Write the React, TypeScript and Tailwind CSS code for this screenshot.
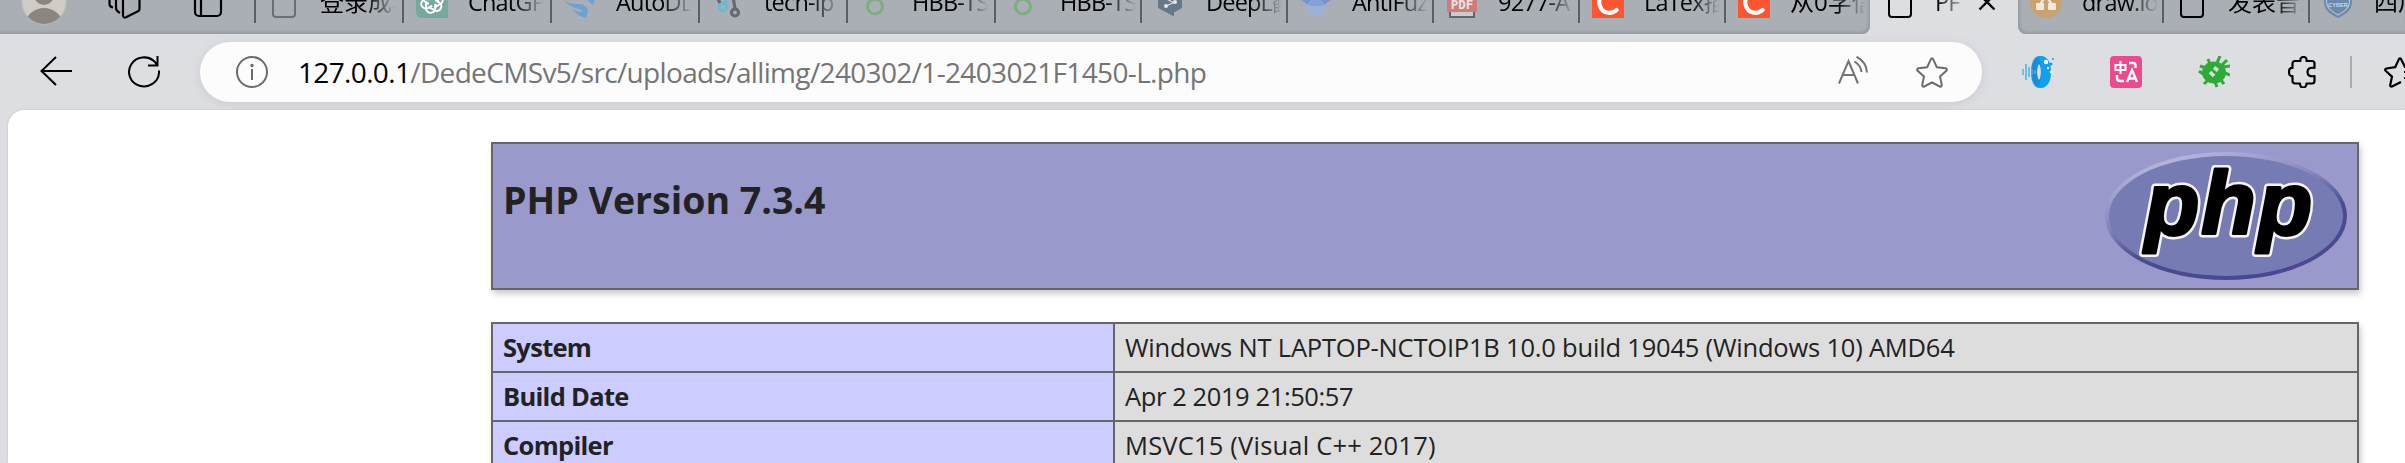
import React from "react";

type Tab = { title: string; width: string; icon: React.ReactNode; cjk?: boolean };

const DocIcon = ({ color }: { color: string }) => (
  <svg width="32" height="32" viewBox="0 0 32 32" fill="none" stroke={color} strokeWidth="2">
    <path d="M8 1h11l8 8v19a3 3 0 0 1-3 3H8a3 3 0 0 1-3-3V4a3 3 0 0 1 3-3z" />
  </svg>
);

const ChatIcon = () => (
  <svg width="32" height="32" viewBox="0 0 32 32">
    <path d="M6 0h26v32H6a6 6 0 0 1-6-6V6a6 6 0 0 1 6-6z" fill="#75a99b" />
    <g transform="translate(4 4)" fill="none" stroke="#fff" strokeWidth="1.9">
      {[0, 60, 120, 180, 240, 300].map((a) => (
        <path key={a} transform={`rotate(${a} 12 12)`} d="M12 8.2 16 6a4.6 4.6 0 0 1 6.2 6.2 4.6 4.6 0 0 1-1.8 1.7L15.4 17M8.6 10.2V6" />
      ))}
    </g>
  </svg>
);

const AutoIcon = () => (
  <svg width="32" height="32" viewBox="0 0 32 32" fill="#70a1d4">
    <path d="M0 13c3 4 8 5 14 5 6 0 10 3 10 7l-2 7c-5-1-12-5-13-9 4 3 9 4 9 2C18 22 6 24 0 13z" />
    <path d="M30 2c2 6 2 11-1 17l-5-4c3-3 4-8 6-13z" />
  </svg>
);

const TechIcon = () => (
  <svg width="32" height="32" viewBox="0 0 32 32" fill="none" strokeWidth="3.2">
    <path d="M18 8l-5 9" stroke="#6cb9cf" />
    <circle cx="11" cy="21" r="3.800" stroke="#6cb9cf" />
    <path d="M5 11l3 6M21 10l2 13" stroke="#666a70" />
    <circle cx="23" cy="26.500" r="3.500" stroke="#666a70" />
  </svg>
);

const RingIcon = () => (
  <svg width="32" height="32" viewBox="0 0 32 32" fill="none">
    <circle cx="15" cy="20.500" r="7.500" stroke="#7cae80" strokeWidth="3" />
  </svg>
);

const DeepIcon = () => (
  <svg width="32" height="32" viewBox="0 0 32 32">
    <path d="M16 0 28 7v15l-8 4.500v4L4 22V7z" fill="#677889" />
    <path d="M12 20l9-4M11 12l9 5" stroke="#d7dbe0" strokeWidth="1.3" />
    <circle cx="12" cy="20" r="2" fill="#e4e7ea" />
    <circle cx="21" cy="16" r="2" fill="#e4e7ea" />
  </svg>
);

const ScholarIcon = () => (
  <svg width="32" height="32" viewBox="0 0 32 32">
    <path d="M16 2 32 13 16 25 0 13z" fill="#7493cf" />
    <circle cx="16" cy="22" r="9" fill="#9db1d8" />
    <path d="M8 18a9 9 0 0 1 16 0l-2 2H10z" fill="#86a1d6" />
  </svg>
);

const PdfIcon = () => (
  <svg width="32" height="32" viewBox="0 0 32 32">
    <path d="M4 1h24v30H4z" fill="#c9cdd1" stroke="#62666b" strokeWidth="2" />
    <path d="M1 9h30v17H1z" fill="#d07b7d" />
    <text x="16" y="22.500" textAnchor="middle" fontFamily="DejaVu Sans Mono" fontWeight="700" fontSize="12.500" fill="#e9e3e4">PDF</text>
  </svg>
);

const CIcon = () => (
  <svg width="32" height="32" viewBox="0 0 32 32">
    <path d="M0 0h32v32H0z" fill="#fc5531" />
    <path d="M24 9c-2-3-6-4-9.500-3C8 8 6 15 8 20c2 7 11 9 16.500 4" fill="none" stroke="#fff" strokeWidth="4.200" strokeLinecap="round" />
  </svg>
);

const DrawIcon = () => (
  <svg width="32" height="32" viewBox="0 0 32 32">
    <circle cx="16" cy="16" r="16" fill="#cba26c" />
    <path d="M16 9 10 19M16 9l6 10" stroke="#eee9e1" strokeWidth="2.500" />
    <rect x="12" y="5" width="8" height="7" rx="1" fill="#eee9e1" />
    <rect x="6" y="17" width="8" height="7" rx="1" fill="#eee9e1" />
    <rect x="18" y="17" width="8" height="7" rx="1" fill="#eee9e1" />
  </svg>
);

const CyberIcon = () => (
  <svg width="32" height="32" viewBox="0 0 32 32">
    <path d="M16 0 30 4v12c0 8-7 13-14 16C9 29 2 24 2 16V4z" fill="#6c88ab" />
    <path d="M16 3 27.500 6v10c0 6-5.500 10-11.500 13C10 26 4.500 22 4.500 16V6z" fill="none" stroke="#b7c3d2" strokeWidth="1.200" />
    <text x="16" y="21" textAnchor="middle" fontFamily="Liberation Sans" fontWeight="700" fontSize="5.500" fill="#d0d7e0">CYBER</text>
  </svg>
);

const leftTabs: Tab[] = [
  { title: "登录成功", width: "w-[148px]", icon: <DocIcon color="#6b6e72" />, cjk: true },
  { title: "ChatGPT", width: "w-[148px]", icon: <ChatIcon /> },
  { title: "AutoDL", width: "w-[148px]", icon: <AutoIcon /> },
  { title: "tech-ip", width: "w-[148px]", icon: <TechIcon /> },
  { title: "HBB-TS", width: "w-[148px]", icon: <RingIcon /> },
  { title: "HBB-TS", width: "w-[146px]", icon: <RingIcon /> },
  { title: "DeepL翻", width: "w-[146px]", icon: <DeepIcon /> },
  { title: "AntiFuzz", width: "w-[146px]", icon: <ScholarIcon /> },
  { title: "9277-A", width: "w-[146px]", icon: <PdfIcon /> },
  { title: "LaTex插", width: "w-[146px]", icon: <CIcon /> },
  { title: "从0学信", width: "w-[146px]", icon: <CIcon />, cjk: true },
];

const rightTabs: Tab[] = [
  { title: "draw.io", width: "w-[144px]", icon: <DrawIcon /> },
  { title: "发表音乐", width: "w-[146px]", icon: <DocIcon color="#000" />, cjk: true },
  { title: "四川大学", width: "w-[146px]", icon: <CyberIcon />, cjk: true },
];

const TabItem = ({ tab, divider = true }: { tab: Tab; divider?: boolean }) => (
  <div className={`flex h-16 shrink-0 items-center ${tab.width}`}>
    {divider && <div className="h-[42px] w-[2px] shrink-0 bg-[#5b5e62]" />}
    <div className="ml-3 w-8 shrink-0">{tab.icon}</div>
    <div
      className={`ml-5 w-[76px] shrink-0 overflow-hidden whitespace-nowrap leading-10 text-black [mask-image:linear-gradient(to_right,#000_46px,transparent_76px)] ${tab.cjk ? "text-[24px]" : "text-[23.5px] tracking-[-0.8px]"}`}
    >
      {tab.title}
    </div>
  </div>
);

const Star = ({ color }: { color: string }) => (
  <svg width="32" height="32" viewBox="0 0 32 32" fill="none" stroke={color} strokeWidth="2" strokeLinejoin="round">
    <path d="M16 2.500c.6 0 1 .3 1.200.8l3.600 7.900 8.600 1.100c1.400.2 1.900 1.500 1 2.400l-6.400 5.900 1.800 8.400c.2 1.300-.9 2.100-2 1.500L16 26.400l-7.800 4.100c-1.100.6-2.200-.2-2-1.500L8 20.600l-6.400-5.900c-.9-.9-.4-2.200 1-2.400l8.600-1.100 3.600-7.900c.2-.5.6-.8 1.200-.8z" />
  </svg>
);

const PhpLogo = () => (
  <svg width="242" height="128" viewBox="0 0 242 128">
    <defs>
      <linearGradient id="rim" x1="0.250" y1="0" x2="0.750" y2="1">
        <stop offset="0.050" stopColor="#b4b4dc" />
        <stop offset="0.380" stopColor="#8585bd" />
        <stop offset="0.620" stopColor="#4b4b90" />
        <stop offset="1" stopColor="#484890" />
      </linearGradient>
    </defs>
    <ellipse cx="121" cy="64" rx="121" ry="64" fill="url(#rim)" />
    <ellipse cx="121" cy="64" rx="117" ry="60" fill="#777bb3" />
    <g fontFamily="Liberation Sans" fontStyle="italic" fontWeight="700" fontSize="89" strokeLinejoin="round">
      <text x="40" y="82" textLength="167" fill="#fff" stroke="#f4f4f8" strokeWidth="8">
        php
      </text>
      <text x="40" y="82" textLength="167" fill="#000" stroke="#000" strokeWidth="3" aria-hidden="true">
        php
      </text>
    </g>
  </svg>
);

const rows = [
  { k: "System", v: "Windows NT LAPTOP-NCTOIP1B 10.0 build 19045 (Windows 10) AMD64", spacing: "tracking-[-0.200px]" },
  { k: "Build Date", v: "Apr 2 2019 21:50:57", spacing: "tracking-[-0.400px]" },
  { k: "Compiler", v: "MSVC15 (Visual C++ 2017)", spacing: "tracking-[0.200px]" },
];

export default function App() {
  return (
    <div className="flex h-[463px] w-[2405px] flex-col overflow-hidden bg-[#dddee2] font-['Open_Sans','Noto_Sans_CJK_SC',sans-serif]">
      <div className="flex h-[34px] shrink-0 overflow-hidden">
        <div className="flex h-[34px] w-[1870px] shrink-0 items-end overflow-hidden rounded-br-[8px] bg-[#aaafb6] shadow-[inset_-2px_-2px_3px_#979ba1]">
          <div className="flex h-16 w-[254px] shrink-0 items-center">
            <svg className="ml-[21px] shrink-0" width="46" height="46" viewBox="0 0 46 46">
              <defs>
                <clipPath id="face"><circle cx="23" cy="23" r="22" /></clipPath>
              </defs>
              <circle cx="23" cy="23" r="22" fill="#d0cdc7" stroke="#c1bfba" />
              <g clipPath="url(#face)" fill="#8c8681">
                <circle cx="23" cy="16" r="10" />
                <ellipse cx="23" cy="44" rx="18" ry="15" />
              </g>
            </svg>
            <svg className="ml-[40px] shrink-0" width="34" height="34" viewBox="0 0 34 34" fill="none" stroke="#000" strokeWidth="2.200" strokeLinejoin="round">
              <path d="M16 9 30 2c1.500-.6 2.500.3 2.500 1.500V24c0 1-.5 1.800-1.500 2.300l-12 6c-1.500.7-3 0-3-1.500z" />
              <path d="M9 5v18c0 2 1 3.500 4 5M2.500 4v15c0 2 1 3 3.500 3.500" />
            </svg>
            <svg className="ml-[51px] shrink-0" width="32" height="32" viewBox="0 0 32 32" fill="none" stroke="#000" strokeWidth="2.200">
              <rect x="3" y="2" width="26" height="28" rx="4" />
              <path d="M9 9v21M3 9h26" />
            </svg>
          </div>
          {leftTabs.map((t, i) => (
            <TabItem key={i} tab={t} />
          ))}
        </div>
        <div className="flex h-[34px] w-[148px] shrink-0 items-end overflow-hidden">
          <div className="flex h-16 items-center">
            <div className="ml-[14px] w-8">
              <DocIcon color="#000" />
            </div>
            <div className="ml-[19px] w-[26px] overflow-hidden whitespace-nowrap text-[23.5px] leading-10 tracking-[-0.8px] text-black [mask-image:linear-gradient(to_right,#000_2px,transparent_32px)]">PF</div>
            <svg className="ml-[17px]" width="18" height="18" viewBox="0 0 18 18" stroke="#000" strokeWidth="2.400">
              <path d="M1.500 1.500l15 15M16.500 1.500l-15 15" />
            </svg>
          </div>
        </div>
        <div className="flex h-[34px] w-[387px] shrink-0 items-end overflow-hidden rounded-bl-[8px] bg-[#aaafb6] shadow-[inset_2px_-2px_3px_#979ba1]">
          {rightTabs.map((t, i) => (
            <TabItem key={i} tab={t} divider={i > 0} />
          ))}
        </div>
      </div>

      <div className="flex h-[76px] shrink-0 items-center">
        <svg className="ml-10 shrink-0" width="32" height="32" viewBox="0 0 32 32" fill="none" stroke="#000" strokeWidth="2">
          <path d="M32 15H1.500M16 1 1.500 15 16 29" />
        </svg>
        <svg className="ml-14 shrink-0" width="32" height="32" viewBox="0 0 32 32" fill="none" stroke="#000" strokeWidth="2">
          <path d="M31 14.500V17a15 14.500 0 1 1-4.500-11.500L29 9M29.500 0v9.500H20" />
        </svg>
        <div className="ml-10 flex h-[60px] w-[1782px] shrink-0 items-center rounded-full bg-[#fcfcfc] shadow-[0_2px_10px_#c9cacf]">
          <svg className="ml-9 shrink-0" width="32" height="32" viewBox="0 0 32 32" fill="none" stroke="#6b6b6b" strokeWidth="2">
            <circle cx="16" cy="16" r="15" />
            <path d="M16 13v11" />
            <circle cx="16" cy="9.500" r="1.700" fill="#6b6b6b" stroke="none" />
          </svg>
          <div className="ml-[30px] flex-1 whitespace-nowrap text-[28px] leading-[60px] tracking-[-0.65px] text-[#757575]">
            <span className="text-black">127.0.0.1</span>/DedeCMSv5/src/uploads/allimg/240302/1-2403021F1450-L.php
          </div>
          <svg className="shrink-0" width="32" height="32" viewBox="0 0 32 32" fill="none" stroke="#737373" strokeWidth="2">
            <path d="M1 27.500 10.500 5 20 27.500M4.500 19h12M16.500 5.500c4 2.500 6.500 6 7 10.500M18.500.8C25 4 28.500 9.500 29 16.500" />
          </svg>
          <div className="ml-[46px] mr-[34px] shrink-0">
            <Star color="#6b6b6b" />
          </div>
        </div>
        <svg className="ml-10 shrink-0" width="32" height="32" viewBox="0 0 32 32">
          <path d="M17 0c8-1 12 6 12 16s-4 17-12 16C11 31 9 24 9 16S11 1 17 0z" fill="#0da2ee" />
          <path d="M15 2c3 2 4 6 4 14s-1 12-4 14c-4-3-5-8-5-14s1-11 5-14z" fill="#2089d4" />
          <path d="M17 8c2.500 3 2.500 13 0 16-2.500-3-2.500-13 0-16z" fill="#dddee2" />
          <path d="M1 13v6M4 8v16M7 11v10M10 13v6M13 14v4" stroke="#4fb0e6" strokeWidth="1.500" />
          <circle cx="24" cy="6" r="2.200" fill="#fff" />
          <circle cx="29" cy="8" r="1.500" fill="#0da2ee" />
          <circle cx="31" cy="3" r="1" fill="#0da2ee" />
          <circle cx="26" cy="12" r="1.200" fill="#dff2fc" />
          <circle cx="29" cy="16" r="1.300" fill="#dff2fc" />
        </svg>
        <svg className="ml-14 shrink-0" width="32" height="32" viewBox="0 0 32 32" fill="none" stroke="#fff" strokeWidth="2.400">
          <rect width="32" height="32" rx="4" fill="#eb4a8c" stroke="none" />
          <path d="M5.500 9h10v5h-10zM10.500 5v13" strokeWidth="2" />
          <path d="M19 7h4q2.500 0 2.500 2.500V12M7 19v2.500Q7 25 10 25h4M17 26l5-12 5 12M19 22.500h6" />
        </svg>
        <svg className="ml-14 shrink-0" width="32" height="32" viewBox="0 0 32 32" stroke="#2eab37" strokeWidth="3" fill="none">
          <path d="M12 8 10 3M19 7l3-7M25 11l7-1M27 17l5 2M23 24l3 4M17 26l2 5M10 24l-4 4M5 18l-4-3M8 12 2 10M24 9l5-5" />
          <ellipse cx="16" cy="16.500" rx="12" ry="11" fill="#2eab37" stroke="none" />
          <path d="m16 11.500 4 3M12 16l4 4" stroke="#d6e2d7" strokeWidth="3.500" />
        </svg>
        <svg className="ml-[58px] shrink-0" width="32" height="32" viewBox="0 0 32 32" fill="none" stroke="#000" strokeWidth="2.200" strokeLinejoin="round">
          <path d="M7 5h5.500c-.5-3 1-4 3-4s3.500 1 3 4H24c1.500 0 2.500 1 2.500 2.500V12c-5-1-7 1-7 4s2 5 7 4v5c0 1.500-1 2.500-2.500 2.500h-5.500c0 3-1.500 4-3.500 4s-3-1-3-4H7C5.500 27.500 4.500 26.500 4.500 25v-5c-2.500.5-3.500-1.500-3.500-4s1-4.500 3.500-4V7.500C4.500 6 5.500 5 7 5z" />
        </svg>
        <div className="ml-[30px] h-8 w-[2px] shrink-0 bg-[#a9abae]" />
        <div className="ml-8 w-[21px] shrink-0 overflow-hidden">
          <div className="w-8">
            <svg width="32" height="32" viewBox="0 0 32 32" fill="none" stroke="#000" strokeWidth="2.200" strokeLinejoin="round">
              <path d="M20 16h12M20 22h12M17 26l-9 4.500c-1 .5-2-.2-1.800-1.300L8 20.600l-6.400-5.900c-.9-.9-.4-2 .8-2.200l8.800-1.300L15 3c.5-1 1.500-1 2 0l4 8 8 1.500" />
            </svg>
          </div>
        </div>
      </div>

      <div className="ml-2 flex h-[353px] flex-col rounded-tl-[16px] bg-white pl-[483px] pt-8 shadow-[0_0_2px_#b8b9bd]">
        <div className="flex h-[148px] w-[1868px] shrink-0 justify-between border-2 border-[#666] bg-[#9999cc] pl-[10px] pr-[10px] pt-2 text-[#222] shadow-[2px_4px_6px_#ccc]">
          <h1 className="mt-[20px] text-[37.5px] font-bold leading-[56px]">PHP Version 7.3.4</h1>
          <PhpLogo />
        </div>
        <div className="mt-8 w-[1868px] border-2 border-[#666] text-[25.5px] leading-[47px] text-[#222] shadow-[2px_4px_6px_#ccc]">
          {rows.map((r) => (
            <div key={r.k} className="flex h-[49px] border-b-2 border-[#666]">
              <div className="w-[622px] shrink-0 border-r-2 border-[#666] bg-[#ccccff] pl-[10px] font-bold tracking-[-0.7px]">{r.k}</div>
              <div className={`flex-1 whitespace-nowrap bg-[#dddddd] pl-[10px] ${r.spacing}`}>{r.v}</div>
            </div>
          ))}
        </div>
      </div>
    </div>
  );
}
